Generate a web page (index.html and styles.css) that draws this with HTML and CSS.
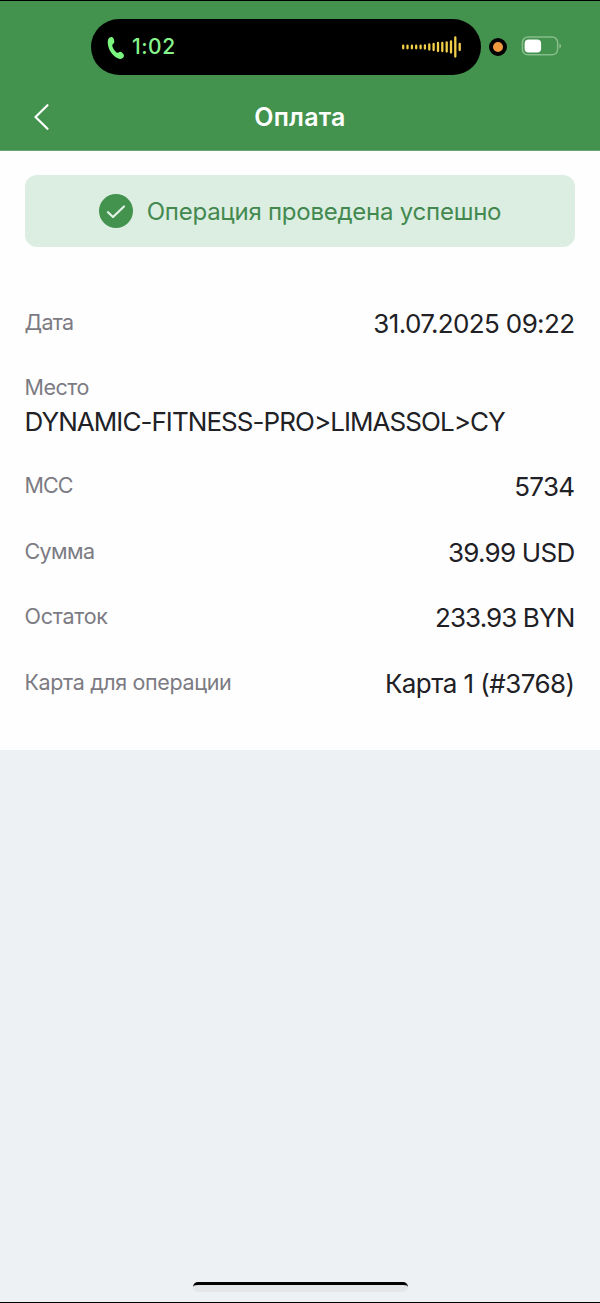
FILE: index.html
```html
<!DOCTYPE html>
<html lang="ru">
<head>
<meta charset="utf-8">
<title>Оплата</title>
<link rel="stylesheet" href="styles.css">
</head>
<body>
<div class="screen">
  <header class="header">
    <div class="status">
      <div class="island">
        <svg class="phone" width="18" height="24" viewBox="0 0 18 24"><path d="M1.2 3.2C2.2 1.6 4.2.6 5.4 1.2 6.9 2 7.6 5.2 7.2 6.6 6.8 7.8 5.2 8.2 5.3 9.6 5.5 11.8 8 15.6 9.8 16.7 11 17.4 12.3 15.6 13.5 15.8 14.8 16 17 18.4 17 19.7 17 21.4 14.8 23 12.8 22.9 9.4 22.7 5.3 19 3 14.8 1 11 .2 5.6 1.2 3.2Z"/></svg>
        <span class="call-time">1:02</span>
        <svg class="wave" width="62" height="24" viewBox="0 0 62 24"><g class="bars"><path d="M2.2 10.7v2.6M6.5 10.7v2.6M10.9 10.7v2.6M15.2 10.7v2.6M19.6 10.7v2.6M23.9 10.4v3.2M28.3 9.4v5.2M32.6 9v6M37 8v8M41.3 8v8M45.7 7.4v9.2M50 6.4v11.2M54.3 2.5v19M58.7 8.9v6.2"/></g></svg>
      </div>
      <div class="recording"></div>
      <svg class="battery" width="40" height="20" viewBox="0 0 40 20"><rect class="shell" x="1.4" y="1" width="35.2" height="17.8" rx="5.5"/><rect class="charge" x="3.6" y="3.4" width="16.5" height="13" rx="4"/><path class="tip" d="M38.3 7.4c2.5.9 2.5 4.1 0 5Z"/></svg>
    </div>
    <div class="navbar">
      <svg class="back" width="18" height="28" viewBox="0 0 18 28"><path d="M15.5 2.2 3.5 14l12 11.8"/></svg>
      <h1 class="title">Оплата</h1>
    </div>
  </header>
  <main class="card">
    <div class="notice">
      <svg width="34" height="34" viewBox="0 0 34 34"><circle class="notice-disc" cx="17" cy="17" r="17"/><path class="notice-check" d="M9 18.2 14 23 25 12.5"/></svg>
      <span class="notice-text">Операция проведена успешно</span>
    </div>
    <div class="details">
      <div class="row"><span class="label date-label">Дата</span><span class="value date">31.07.2025 09:22</span></div>
      <div class="place"><span class="label place-label">Место</span><span class="value place-value">DYNAMIC-FITNESS-PRO&gt;LIMASSOL&gt;CY</span></div>
      <div class="row"><span class="label mcc-label">МСС</span><span class="value mcc">5734</span></div>
      <div class="row"><span class="label sum-label">Сумма</span><span class="value sum">39.99 USD</span></div>
      <div class="row"><span class="label rest-label">Остаток</span><span class="value rest">233.93 BYN</span></div>
      <div class="row"><span class="label source-label">Карта для операции</span><span class="value source">Карта 1 (#3768)</span></div>
    </div>
  </main>
  <footer class="footer"><div class="home"></div></footer>
</div>
</body>
</html>
```
FILE: styles.css
```css
* { box-sizing: border-box; }
body { margin: 0; font-family: Inter, "Noto Sans", sans-serif; }
.screen {
  width: 600px;
  height: 1303px;
  display: flex;
  flex-direction: column;
  background: #edf1f4;
  border-top: 1px solid #000;
  border-bottom: 1px solid #000;
}
.header { height: 150px; background: #43924d; border-bottom: 1px solid #69a671; }
.status { height: 92px; padding: 18px 0 0 91px; display: flex; align-items: flex-start; }
.island {
  width: 390px;
  height: 56px;
  border-radius: 28px;
  background: #000;
  display: flex;
  align-items: center;
  padding: 0 18px 0 16px;
}
.phone { fill: #7bf77f; margin-top: 1px; }
.call-time { color: #87f58b; font-size: 21px; font-weight: 500; line-height: 28px; margin-left: 7px; letter-spacing: 0.5px; }
.wave { margin-left: auto; }
.bars { fill: none; stroke: #f4cf49; stroke-width: 2.3; stroke-linecap: round; }
.recording { width: 18px; height: 18px; margin: 19px 0 0 8px; border-radius: 50%; background: #f09a3f; border: 4.5px solid #000; }
.battery { margin: 17px 0 0 14px; }
.shell { fill: none; stroke: #87bd8c; stroke-width: 1.5; }
.charge { fill: #fff; }
.tip { fill: #87bd8c; }
.navbar { display: grid; grid-template-columns: 64px 1fr 64px; align-items: center; height: 48px; }
.back { margin-left: 32px; fill: none; stroke: #fff; stroke-width: 2.2; stroke-linecap: round; stroke-linejoin: round; }
.title { margin: 0; color: #fff; font-size: 25px; line-height: 32px; font-weight: 600; text-align: center; letter-spacing: 0.2px; }
.card { height: 599px; background: #fefefe; padding: 24px 25px 0; }
.notice {
  height: 72px;
  border-radius: 12px;
  background: #dceee2;
  display: flex;
  align-items: center;
  justify-content: center;
  gap: 14px;
}
.notice-disc { fill: #43924d; }
.notice-check { fill: none; stroke: #e4f3e8; stroke-width: 2.2; stroke-linecap: round; stroke-linejoin: round; }
.notice-text { color: #43894f; font-size: 24px; letter-spacing: -0.24px; white-space: nowrap; }
.details { padding-top: 61.2px; display: flex; flex-direction: column; gap: 33.5px; }
.row { display: flex; justify-content: space-between; height: 32px; }
.place { display: flex; flex-direction: column; align-items: flex-start; gap: 6px; }
.label { color: #7c7b83; font-size: 21.5px; line-height: 29px; white-space: nowrap; margin-left: -0.5px; }
.date-label { letter-spacing: -0.7px; }
.place-label { line-height: 26px; letter-spacing: -0.5px; }
.mcc-label { letter-spacing: -1px; }
.sum-label { letter-spacing: -0.6px; }
.rest-label { letter-spacing: -0.25px; }
.source-label { letter-spacing: -0.36px; }
.value { color: #202025; font-size: 26px; line-height: 32px; white-space: nowrap; }
.row .value { margin-right: 0.6px; }
.date { letter-spacing: -0.64px; }
.place-value { letter-spacing: -0.94px; margin-left: -0.5px; }
.mcc { letter-spacing: -0.7px; }
.sum { letter-spacing: -0.75px; }
.rest { letter-spacing: -0.9px; }
.source { letter-spacing: -0.56px; }
.footer { margin-top: auto; padding-bottom: 10px; display: flex; justify-content: center; }
.home { width: 215px; height: 10px; border-radius: 5px; background: #e4e6e8; border-top: 3px solid #000; }
```
